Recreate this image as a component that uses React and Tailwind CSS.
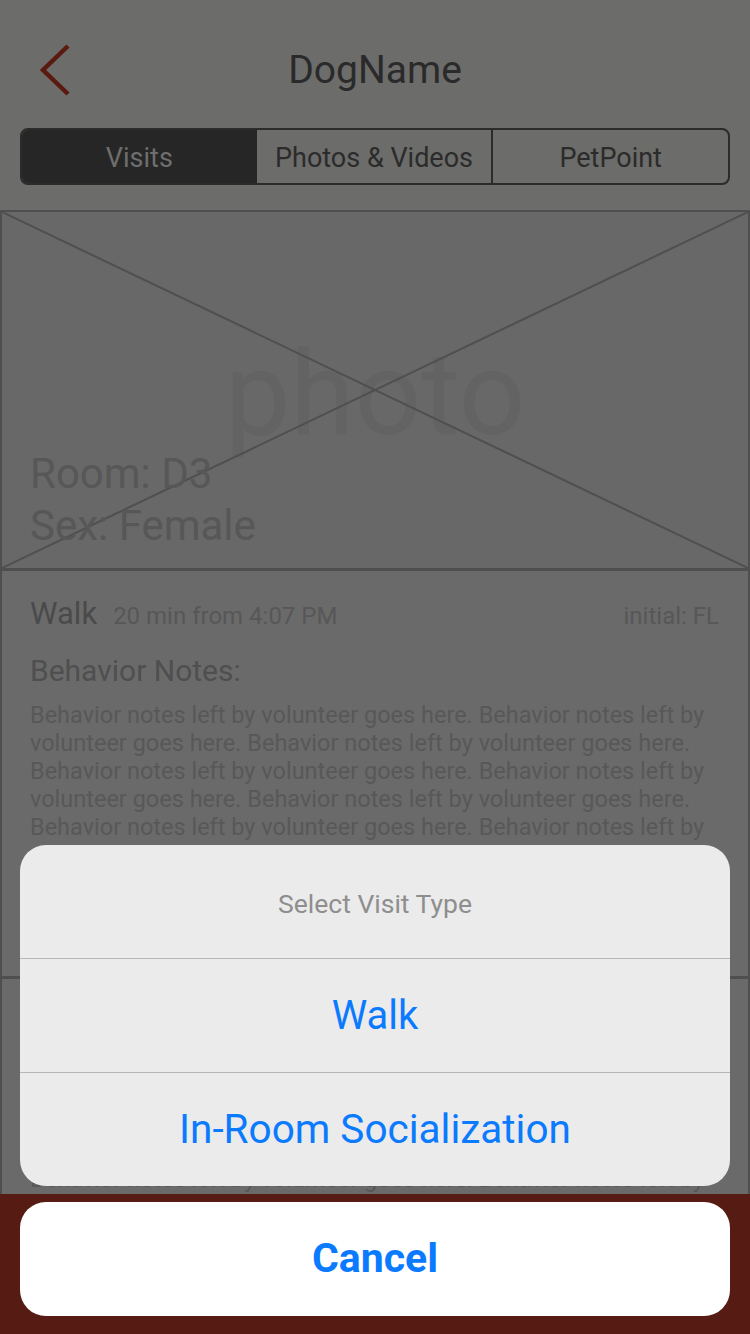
import React from "react";

const lines = [
  "Behavior notes left by volunteer goes here. Behavior notes left by",
  "volunteer goes here. Behavior notes left by volunteer goes here.",
  "Behavior notes left by volunteer goes here. Behavior notes left by",
  "volunteer goes here. Behavior notes left by volunteer goes here.",
  "Behavior notes left by volunteer goes here. Behavior notes left by",
  "volunteer goes here. Behavior notes left by volunteer goes here.",
  "Behavior notes left by volunteer goes here. Behavior notes left by",
  "volunteer goes here. Behavior notes left by volunteer goes here.",
  "Behavior notes left by volunteer goes here. Behavior notes left by",
  "volunteer goes here. Behavior notes left by volunteer goes here.",
];

function VisitCard() {
  return (
    <div className="border-x-2 border-b-[3px] border-[#4f4f4f] px-[28px] pt-[23px] h-[408px] overflow-hidden shrink-0">
      <div className="flex items-baseline">
        <span className="text-[31px] leading-[40px] text-[#4a4a4a]">Walk</span>
        <span className="ml-[16px] text-[24px] text-[#575757]">20 min from 4:07 PM</span>
        <span className="ml-auto mr-[1px] text-[24px] text-[#575757]">initial: FL</span>
      </div>
      <div className="mt-[19px] text-[30px] leading-[36px] text-[#4f4f4f]">Behavior Notes:</div>
      <div className="mt-[12px] text-[23.5px] leading-[28px] text-[#585858]">
        {lines.map((l, i) => (
          <div key={i} className="whitespace-nowrap">{l}</div>
        ))}
      </div>
    </div>
  );
}

export default function App() {
  return (
    <div
      className="relative w-[750px] h-[1334px] overflow-hidden bg-[#6c6c6a]"
      style={{ fontFamily: "Roboto, 'Noto Sans', sans-serif" }}
    >
      <div className="flex flex-col h-full">
        {/* Nav bar */}
        <div className="relative h-[128px] shrink-0 flex items-start justify-center">
          <svg className="absolute left-[38px] top-[44px]" width="34" height="52" viewBox="0 0 34 52">
            <polyline points="30,2 5,26 30,50" fill="none" stroke="#5b1a10" strokeWidth="4.5" />
          </svg>
          <div className="mt-[46px] text-[39px] leading-[48px] text-[#2a2a2a]">DogName</div>
        </div>

        {/* Segmented control */}
        <div className="mx-[20px] h-[57px] shrink-0 flex rounded-[8px] border-2 border-[#2b2b2b] overflow-hidden text-[27px]">
          <div className="flex-1 bg-[#262626] flex items-center justify-center pt-[3px] text-[#6e6e6e]">Visits</div>
          <div className="flex-1 flex items-center justify-center pt-[3px] text-[#2b2b2b] border-r-2 border-[#2b2b2b]">Photos &amp; Videos</div>
          <div className="flex-1 flex items-center justify-center pt-[3px] text-[#2b2b2b]">PetPoint</div>
        </div>

        {/* Photo */}
        <div className="relative mt-[25px] h-[361px] shrink-0 bg-[#686868] border-x-2 border-t-2 border-b-[3px] border-[#4f4f4f] flex flex-col justify-end px-[28px] pb-[16px]">
          <div className="absolute inset-0 flex items-center justify-center pt-[8px]">
            <span className="text-[117px] leading-none text-[#636363]">photo</span>
          </div>
          <svg className="absolute inset-0" width="100%" height="100%" viewBox="0 0 746 356" preserveAspectRatio="none">
            <line x1="0" y1="0" x2="746" y2="356" stroke="#4f4f4f" strokeWidth="2" />
            <line x1="746" y1="0" x2="0" y2="356" stroke="#4f4f4f" strokeWidth="2" />
          </svg>
          <div className="relative text-[42px] leading-[52px] text-[#575757]">Room: D3</div>
          <div className="relative text-[42px] leading-[52px] text-[#575757]">Sex: Female</div>
        </div>

        {/* Cards */}
        <div className="flex-1 overflow-hidden bg-[#6a6a6a]">
          <VisitCard />
          <VisitCard />
        </div>

        {/* Bottom bar */}
        <div className="h-[140px] shrink-0 bg-[#561c13]" />
      </div>

      {/* Action sheet */}
      <div className="absolute left-[20px] right-[20px] bottom-[18px] flex flex-col gap-[16px]">
        <div className="rounded-[26px] bg-[#ebebeb] overflow-hidden flex flex-col">
          <div className="h-[114px] flex items-center justify-center pt-[4px] text-[26.5px] text-[#8e8e8e] border-b border-[#b6b6b6]">
            Select Visit Type
          </div>
          <div className="h-[114px] flex items-center justify-center text-[40px] text-[#0a7aff] border-b border-[#b6b6b6]">
            Walk
          </div>
          <div className="h-[113px] flex items-center justify-center text-[40.5px] text-[#0a7aff]">
            In-Room Socialization
          </div>
        </div>
        <div className="h-[114px] rounded-[26px] bg-white flex items-center justify-center text-[41px] font-bold text-[#0a7aff]">
          Cancel
        </div>
      </div>
    </div>
  );
}
